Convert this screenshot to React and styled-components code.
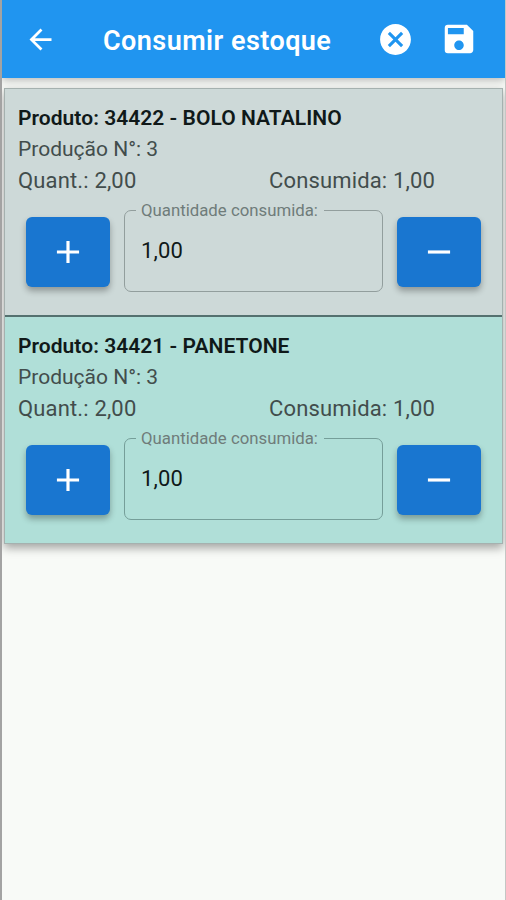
import React, { useState } from "react";
import styled, { createGlobalStyle } from "styled-components";
import { MdAdd, MdArrowBack, MdCancel, MdRemove, MdSave } from "react-icons/md";

const products = [
  {
    code: 34422,
    name: "BOLO NATALINO",
    production: 3,
    quantity: 2,
    consumed: 1,
    color: "#cdd9d8",
    line: "#929e9d",
    divider: "#54716f",
  },
  {
    code: 34421,
    name: "PANETONE",
    production: 3,
    quantity: 2,
    consumed: 1,
    color: "#b0dfd8",
    line: "#759e99",
  },
];

const format = (value) => value.toFixed(2).replace(".", ",");

const Product = ({ product }) => {
  const [amount, setAmount] = useState(product.consumed);

  return (
    <Item $color={product.color} $divider={product.divider}>
      <Name>
        Produto: {product.code} - {product.name}
      </Name>
      <Info $small>Produção N°: {product.production}</Info>
      <Totals>
        <Info>Quant.: {format(product.quantity)}</Info>
        <Info>Consumida: {format(product.consumed)}</Info>
      </Totals>
      <Controls>
        <StepButton aria-label="Adicionar" onClick={() => setAmount(amount + 1)}>
          <MdAdd />
        </StepButton>
        <Field $line={product.line}>
          <legend>Quantidade consumida:</legend>
          <span>{format(amount)}</span>
        </Field>
        <StepButton
          aria-label="Remover"
          onClick={() => setAmount(Math.max(0, amount - 1))}
        >
          <MdRemove />
        </StepButton>
      </Controls>
    </Item>
  );
};

const App = () => {
  return (
    <>
      <GlobalStyle />
      <Screen>
        <AppBar>
          <IconButton $size={33} aria-label="Voltar">
            <MdArrowBack />
          </IconButton>
          <Title>Consumir estoque</Title>
          <IconButton $size={37} aria-label="Cancelar">
            <MdCancel />
          </IconButton>
          <IconButton $size={38} aria-label="Salvar">
            <MdSave />
          </IconButton>
        </AppBar>
        <List>
          {products.map((product) => (
            <Product key={product.code} product={product} />
          ))}
        </List>
      </Screen>
    </>
  );
};

const GlobalStyle = createGlobalStyle`
  * {
    box-sizing: border-box;
  }
  body {
    margin: 0;
    font-family: Roboto, "Liberation Sans", sans-serif;
  }
`;

const Screen = styled.div`
  height: 900px;
  border-left: 2px solid #a3a3a3;
  border-right: 1px solid #c4c6c4;
  background: #f8faf7;
  overflow: hidden;
`;

const AppBar = styled.header`
  display: flex;
  align-items: center;
  height: 78px;
  padding: 0 27px 0 22px;
  color: #fff;
  background: #2095f0;
  box-shadow: 0 2px 8px rgba(0, 0, 0, 0.28);
`;

const IconButton = styled.button`
  display: flex;
  padding: 0;
  border: 0;
  color: inherit;
  background: none;
  font-size: ${(props) => props.$size}px;

  & + & {
    margin-left: 26px;
  }
`;

const Title = styled.h1`
  flex: 1;
  margin: 3px 0 0 46px;
  font-size: 27px;
  font-weight: 600;
  letter-spacing: 0.45px;
  line-height: 32px;
  white-space: nowrap;
`;

const List = styled.main`
  margin: 10px 2px 0;
  border: 1px solid #a5b1af;
  box-shadow: 0 4px 9px rgba(0, 0, 0, 0.35);
`;

const Item = styled.section`
  height: 228px;
  padding: 13px 21px 0 13px;
  color: #101919;
  background: ${(props) => props.$color};

  ${(props) => props.$divider && `border-bottom: 2px solid ${props.$divider};`}

  &:last-child {
    height: 226px;
  }
`;

const Name = styled.h2`
  margin: 0;
  font-size: 21px;
  font-weight: 600;
  letter-spacing: 0.04px;
  line-height: 32px;
`;

const Info = styled.p`
  margin: 0;
  color: #424d4c;
  font-size: ${(props) => (props.$small ? 21 : 22)}px;
  letter-spacing: ${(props) => (props.$small ? 0 : 0.15)}px;
  line-height: 31px;
`;

const Totals = styled.div`
  display: grid;
  grid-template-columns: 251px 1fr;
`;

const Controls = styled.div`
  display: flex;
  gap: 14px;
  align-items: flex-start;
  padding-left: 8px;
`;

const StepButton = styled.button`
  display: flex;
  flex: none;
  align-items: center;
  justify-content: center;
  width: 84px;
  height: 70px;
  margin-top: 21px;
  padding: 0;
  border: 0;
  border-radius: 6px;
  color: #fff;
  background: #1976d0;
  box-shadow: 0 4px 6px rgba(0, 0, 0, 0.3);
  font-size: 38px;
`;

const Field = styled.fieldset`
  flex: 1;
  min-width: 0;
  height: 92px;
  margin: 4px 0 0;
  padding: 0 16px;
  border: 1px solid ${(props) => props.$line};
  border-radius: 7px;

  legend {
    margin-left: -5px;
    padding: 0 6px 0 5px;
    color: #6f7c7a;
    font-size: 16.8px;
    line-height: 20px;
  }

  span {
    display: block;
    margin-top: 18px;
    font-size: 22px;
    letter-spacing: 0.15px;
    line-height: 26px;
  }
`;

export default App;
